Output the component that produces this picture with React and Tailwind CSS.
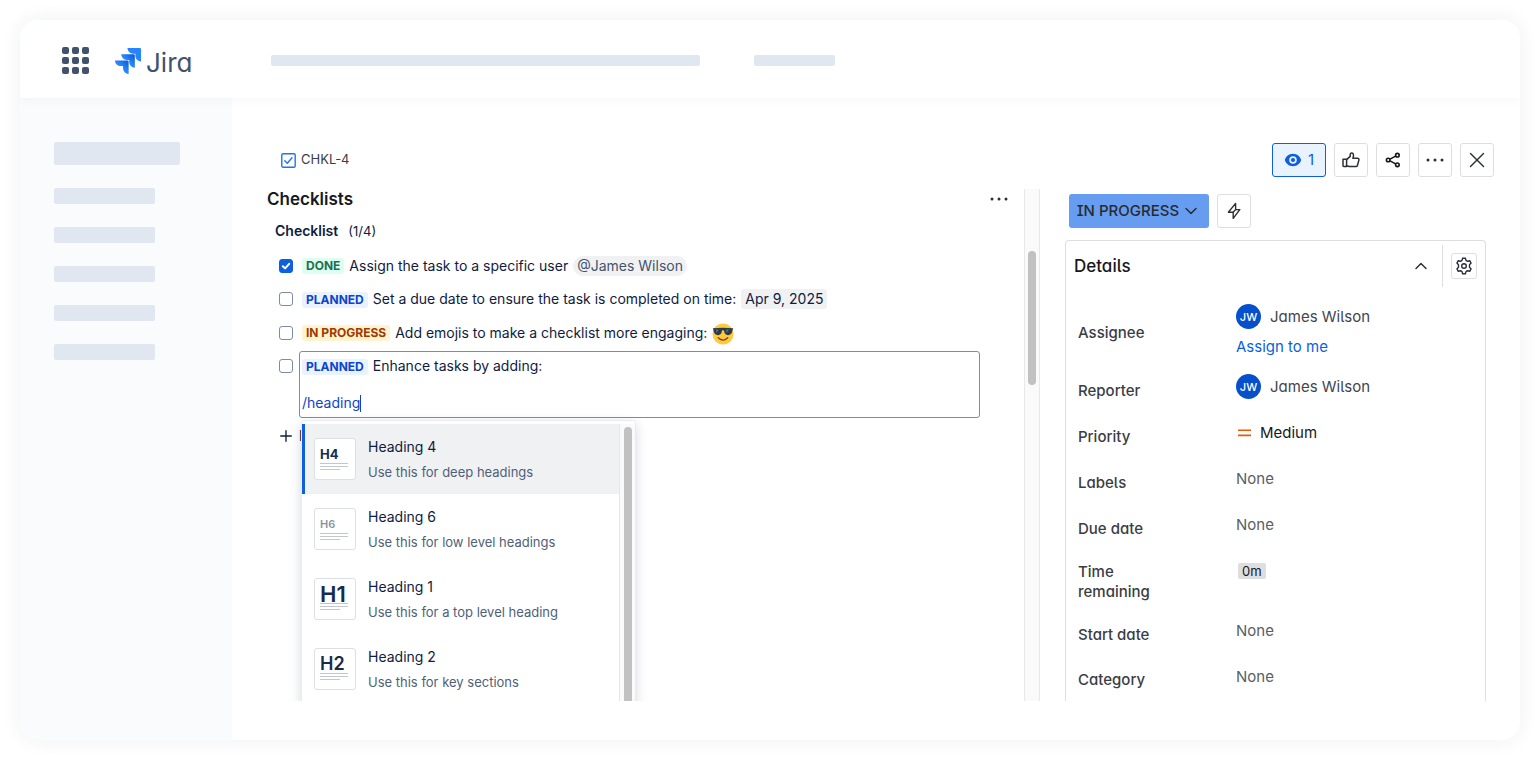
import React from "react";
import { ChevronDown, ChevronUp, Plus, X } from "lucide-react";

const TAGS = {
  DONE: "bg-[#dcfff1] text-[#216e4e]",
  PLANNED: "bg-[#e9f2ff] text-[#0c45cc]",
  "IN PROGRESS": "bg-[#fff4cf] text-[#a33800]",
};

function Tag({ name }) {
  return (
    <span className={"mt-px rounded-[3px] px-1 text-[12px] font-bold leading-4 " + TAGS[name]}>
      {name}
    </span>
  );
}

function Check({ id, label, checked }) {
  return (
    <span className="grid size-[14px] shrink-0">
      <input
        id={id}
        type="checkbox"
        aria-label={label}
        defaultChecked={checked}
        className="peer col-start-1 row-start-1 size-[14px] appearance-none rounded-[3px] border border-[#7f8ba0] bg-white checked:border-[#0c5fe0] checked:bg-[#0c5fe0]"
      />
      <svg
        viewBox="0 0 14 14"
        className="pointer-events-none col-start-1 row-start-1 hidden size-[14px] peer-checked:block"
        fill="none"
        stroke="#fff"
        strokeWidth="2"
        strokeLinecap="round"
        strokeLinejoin="round"
      >
        <path d="M3.8 7.2 6.1 9.4 10.2 4.8" />
      </svg>
    </span>
  );
}

function Dots({ className }) {
  return (
    <svg viewBox="0 0 18 4" className={className} fill="currentColor">
      <circle cx="2" cy="2" r="1.5" />
      <circle cx="9" cy="2" r="1.5" />
      <circle cx="16" cy="2" r="1.5" />
    </svg>
  );
}

function JiraMark() {
  return (
    <svg viewBox="0 0 24 24" className="size-[26px]">
      <defs>
        <linearGradient id="jiraMid" x1="18" y1="6" x2="11" y2="13" gradientUnits="userSpaceOnUse">
          <stop offset="0.15" stopColor="#0f5fd8" />
          <stop offset="0.8" stopColor="#2684ff" />
        </linearGradient>
        <linearGradient id="jiraLow" x1="12.5" y1="11.5" x2="5.5" y2="18.5" gradientUnits="userSpaceOnUse">
          <stop offset="0.15" stopColor="#0f5fd8" />
          <stop offset="0.8" stopColor="#2684ff" />
        </linearGradient>
      </defs>
      <path fill="#2684ff" d="M23.013 0H11.455a5.215 5.215 0 0 0 5.215 5.215h2.129v2.057A5.215 5.215 0 0 0 24 12.483V1.005A1.001 1.001 0 0 0 23.013 0Z" />
      <path fill="url(#jiraMid)" d="M17.294 5.757H5.736a5.215 5.215 0 0 0 5.215 5.214h2.129v2.058a5.218 5.218 0 0 0 5.215 5.214V6.758a1.001 1.001 0 0 0-1.001-1.001Z" />
      <path fill="url(#jiraLow)" d="M11.571 11.513H0a5.218 5.218 0 0 0 5.232 5.215h2.13v2.057A5.215 5.215 0 0 0 12.575 24V12.518a1.005 1.005 0 0 0-1.005-1.005Z" />
    </svg>
  );
}

function AppGrid() {
  return (
    <svg viewBox="0 0 27 27" className="size-[27px]" fill="#42526e">
      {[0, 10, 20].map((y) =>
        [0, 10, 20].map((x) => <rect key={x + "-" + y} x={x} y={y} width="7" height="7" rx="2" />)
      )}
    </svg>
  );
}

function Sunglasses() {
  return (
    <svg viewBox="0 0 22 22" className="mt-[3px] size-[22px]" role="img" aria-label="Smiling face with sunglasses">
      <circle cx="11" cy="11" r="10.5" fill="#ffc83d" />
      <path d="M.8 5.2Q11 4.4 21.2 5.2L20.6 6.8Q20 12.2 16 12.2 12.6 12.2 12 7.6L11 7.2 10 7.6Q9.4 12.2 6 12.2 2 12.2 1.4 6.8Z" fill="#2b3b47" />
      <path d="M4 6.6l2.6 0-2.2 3.4zM14.2 6.6l2.6 0-2.2 3.4z" fill="#5b7383" />
      <path d="M6.2 14.8Q11 19.4 15.8 14.8" fill="none" stroke="#7a4a12" strokeWidth="1.3" strokeLinecap="round" />
    </svg>
  );
}

function Eye() {
  return (
    <svg viewBox="0 0 18 14" className="h-[14px] w-[18px]">
      <path fillRule="evenodd" fill="#0c5fe0" d="M9 .8C4.8.8 1.9 3.6.8 7 1.9 10.4 4.8 13.2 9 13.2S16.1 10.4 17.2 7C16.1 3.6 13.2.8 9 .8Zm0 2.4a3.8 3.8 0 1 1 0 7.6 3.8 3.8 0 0 1 0-7.6Z" />
      <circle cx="9" cy="7" r="2.1" fill="#0c5fe0" />
    </svg>
  );
}

function Thumb() {
  return (
    <svg viewBox="0 0 18 16" className="h-4 w-[18px]" fill="none" stroke="#2c2f36" strokeWidth="1.5" strokeLinejoin="round">
      <path d="M1 7.2h3.6v7.4H2.2A1.2 1.2 0 0 1 1 13.4Z" />
      <path d="M4.6 7.6 8.2 4.4V2.6a1.6 1.6 0 0 1 3.1-.5c.5 1.4.2 2.7-.4 4.1h4.6a1.5 1.5 0 0 1 1.4 1.9l-1.5 5.4a1.5 1.5 0 0 1-1.4 1.1H7.8c-1.2 0-1.7-.7-3.2-.9" />
    </svg>
  );
}

function Share() {
  return (
    <svg viewBox="0 0 16 16" className="size-4" fill="none" stroke="#17181c" strokeWidth="1.6">
      <circle cx="3.2" cy="8" r="1.8" />
      <circle cx="12.4" cy="3.2" r="1.8" />
      <circle cx="12.4" cy="12.8" r="1.8" />
      <path d="M5 7.1 10.6 4.1M5 8.9l5.6 3" />
    </svg>
  );
}

function Bolt() {
  return (
    <svg viewBox="0 0 14 18" className="h-[18px] w-[14px]" fill="none" stroke="#2c2f36" strokeWidth="1.4" strokeLinejoin="round">
      <path d="M8.6 1.4 1.4 10.2h4.8v6.2l6.6-8.8H8.6Z" />
      <path d="M8.6 7.6 6.2 10.2" />
    </svg>
  );
}

function Gear() {
  return (
    <svg viewBox="0 0 18 18" className="size-[18px]" fill="none" stroke="#2c2f36" strokeWidth="1.4" strokeLinejoin="round">
      <path d="M7.6 1.2h2.8l.6 2.2 1.5.9 2.2-.6 1.4 2.4L14.5 7.7v2.6l1.6 1.6-1.4 2.4-2.2-.6-1.5.9-.6 2.2H7.6L7 14.6l-1.5-.9-2.2.6-1.4-2.4 1.6-1.6V7.7L1.9 6.1l1.4-2.4 2.2.6L7 3.4Z" />
      <circle cx="9" cy="9" r="2.3" />
    </svg>
  );
}

function IssueTypeIcon() {
  return (
    <svg viewBox="0 0 15 15" className="size-[15px]" fill="none" stroke="#2174ee" strokeWidth="1.4">
      <rect x="0.8" y="0.8" width="13.4" height="13.4" rx="1.2" />
      <path d="M3.8 7.8 6.3 10.2 11 4.8" strokeLinecap="round" strokeLinejoin="round" />
    </svg>
  );
}

const BOX = "flex h-[34px] items-center justify-center rounded-[3px] border border-[#dcdee2] bg-white text-[#2c2f36]";

function HeadingOption({ code, codeClass, title, text, active }) {
  return (
    <button
      type="button"
      className={
        "flex h-[70px] w-full items-center gap-3 border-l-[3px] pl-[9px] text-left " +
        (active ? "border-[#0c5fe0] bg-[#f0f1f3]" : "border-transparent")
      }
    >
      <span className="flex size-[42px] flex-col justify-end rounded-[3px] border border-[#dcdfe4] bg-white px-[5px] pb-2">
        <span className={"leading-4 " + codeClass}>{code}</span>
        <svg viewBox="0 0 28 9" className="h-[9px] w-7" stroke="#c1c7d0" strokeWidth="1.2">
          <path d="M0 1.5h28M0 4.5h28M0 7.5h20" />
        </svg>
      </span>
      <span className="flex flex-col gap-[5px]">
        <span className="text-[14px] leading-5 text-[#0f1c40]">{title}</span>
        <span className="text-[13px] leading-5 text-[#505f79]">{text}</span>
      </span>
    </button>
  );
}

const HEADINGS = [
  { code: "H4", codeClass: "text-[13px] font-bold text-[#172b4d]", title: "Heading 4", text: "Use this for deep headings", active: true },
  { code: "H6", codeClass: "text-[11px] font-semibold text-[#8993a4]", title: "Heading 6", text: "Use this for low level headings" },
  { code: "H1", codeClass: "text-[22px] font-semibold text-[#172b4d]", title: "Heading 1", text: "Use this for a top level heading" },
  { code: "H2", codeClass: "text-[18px] font-semibold text-[#172b4d]", title: "Heading 2", text: "Use this for key sections" },
];

function Person() {
  return (
    <span className="flex items-center gap-[9px]">
      <span className="flex size-[25px] items-center justify-center rounded-full bg-[#0650cc] text-[11px] font-medium text-white">
        JW
      </span>
      <span className="text-[#42454d]">James Wilson</span>
    </span>
  );
}

function Field({ label, height, children }) {
  return (
    <div className={"flex " + (height || "h-[46px]")}>
      <dt className="flex w-[158px] shrink-0 items-center pr-16 pt-[2px] font-medium text-[#3a3d44]">{label}</dt>
      <dd className="flex flex-col items-start gap-2 pt-[7px]">{children}</dd>
    </div>
  );
}

function None() {
  return <span className="leading-[25px] text-[#5a5d66]">None</span>;
}

export default function App() {
  return (
    <div className="flex min-h-screen bg-white p-5 font-['Inter',sans-serif]">
      <div className="flex flex-1 flex-col overflow-hidden rounded-[18px] bg-white shadow-[0_0_20px_rgba(23,43,77,0.07)]">
        <header className="z-10 flex h-[78px] shrink-0 items-center bg-white pl-[42px] pt-[3px] shadow-[0_2px_10px_rgba(23,43,77,0.04)]">
          <button type="button" aria-label="App switcher">
            <AppGrid />
          </button>
          <a href="#" className="ml-[26px] flex items-center gap-[5px]">
            <JiraMark />
            <span className="pt-1 text-[26px] leading-8 text-[#42526e] [font-feature-settings:'cv11']">Jira</span>
          </a>
          <div className="ml-[79px] h-[11px] w-[429px] rounded-[2px] bg-[#e1e7f0]" />
          <div className="ml-[54px] h-[11px] w-[81px] rounded-[2px] bg-[#e1e7f0]" />
        </header>

        <div className="flex flex-1">
          <nav className="flex w-[212px] shrink-0 flex-col gap-[23px] bg-[#fafbfc] pl-[34px] pt-11">
            <div className="h-[23px] w-[126px] rounded-[2px] bg-[#e1e7f0]" />
            {[0, 1, 2, 3, 4].map((i) => (
              <div key={i} className="h-4 w-[101px] rounded-[2px] bg-[#e1e7f0]" />
            ))}
          </nav>

          <main className="flex min-w-0 flex-1 flex-col gap-3 pb-[39px] pt-[45px]">
            <div className="flex items-center justify-between pl-[49px] pr-[26px]">
              <a href="#" className="flex items-center gap-[5px] text-[13px] text-[#3a3d44]">
                <IssueTypeIcon />
                CHKL-4
              </a>
              <div className="flex gap-2">
                <button type="button" aria-label="Watchers: 1" className="flex h-[34px] w-[54px] items-center justify-center gap-1.5 rounded-[3px] border border-[#0c5fe0] bg-[#e9f2ff] text-[15px] text-[#0c5fe0]">
                  <Eye />1
                </button>
                <button type="button" aria-label="Like" className={BOX + " w-[34px]"}><Thumb /></button>
                <button type="button" aria-label="Share" className={BOX + " w-[34px]"}><Share /></button>
                <button type="button" aria-label="More actions" className={BOX + " w-[34px]"}><Dots className="h-1 w-[18px]" /></button>
                <button type="button" aria-label="Close" className={BOX + " w-[34px]"}><X size={26} strokeWidth={1.3} /></button>
              </div>
            </div>

            <div className="relative flex flex-1 overflow-hidden pr-[34px]">
              <section className="min-w-0 flex-1 pl-[35px] text-[14px] text-[#0f1c40]">
                <div className="flex items-center justify-between pr-4">
                  <h1 className="text-[17px] font-semibold leading-5 text-[#17181c]">Checklists</h1>
                  <button type="button" aria-label="Checklist actions" className="text-[#2c2f36]"><Dots className="h-1 w-[18px]" /></button>
                </div>
                <h2 className="mt-3 flex items-center gap-2.5 pl-2 font-semibold leading-5">
                  Checklist
                  <span className="text-[13px] font-normal">(1/4)</span>
                </h2>

                <ul className="mt-2 pl-3 leading-5">
                  <li className="flex h-[33px] items-center gap-[9px]">
                    <Check id="item-1" checked />
                    <label htmlFor="item-1" className="flex items-center gap-[5px]">
                      <Tag name="DONE" />
                      Assign the task to a specific user
                      <span className="rounded-full bg-[#f0f1f3] px-1 text-[#44546f]">@James Wilson</span>
                    </label>
                  </li>
                  <li className="flex h-[34px] items-center gap-[9px]">
                    <Check id="item-2" />
                    <label htmlFor="item-2" className="flex items-center gap-[5px]">
                      <Tag name="PLANNED" />
                      Set a due date to ensure the task is completed on time:
                      <span className="rounded-[3px] bg-[#f0f1f3] px-1">Apr 9, 2025</span>
                    </label>
                  </li>
                  <li className="flex h-[33px] items-center gap-[9px]">
                    <Check id="item-3" />
                    <label htmlFor="item-3" className="flex items-center gap-[5px]">
                      <Tag name="IN PROGRESS" />
                      Add emojis to make a checklist more engaging:
                      <Sunglasses />
                    </label>
                  </li>
                  <li className="flex items-start gap-[6px] pr-11 pt-[2px]">
                    <span className="pt-2"><Check id="item-4" label="Enhance tasks by adding:" /></span>
                    <div className="relative h-[67px] flex-1 rounded-[3px] border border-[#7f8ba0] px-[2px] pt-1">
                      <div className="flex items-center gap-[5px]">
                        <Tag name="PLANNED" />
                        Enhance tasks by adding:
                      </div>
                      <div className="mt-[17px] flex items-center">
                        <input
                          type="text"
                          aria-label="Item text"
                          defaultValue="/heading"
                          className="field-sizing-content bg-transparent p-0 leading-5 text-[#0c45cc] outline-none"
                        />
                        <span className="h-[17px] w-px bg-[#0c45cc]" />
                      </div>

                      <div className="absolute left-[1px] top-full z-20 mt-[3px] flex w-[335px] rounded-t-[3px] border border-[#e9ebee] bg-white pt-[3px] shadow-[0_4px_12px_rgba(23,43,77,0.18)]">
                        <div className="flex-1">
                          {HEADINGS.map((h) => (
                            <HeadingOption key={h.code} {...h} />
                          ))}
                        </div>
                        <div className="flex w-4 justify-center border-l border-[#e6e6e6] bg-[#fafafa] pt-[3px]">
                          <div className="w-2 rounded-t-full bg-[#c1c1c1]" />
                        </div>
                      </div>
                    </div>
                  </li>
                </ul>
                <button type="button" className="mt-2 flex items-center gap-1 pl-[10px] font-medium leading-5">
                  <Plus size={18} strokeWidth={1.8} />N
                </button>
              </section>

              <div className="flex w-4 shrink-0 justify-center border-x border-[#e8e8e8] bg-[#fafafa] pt-[62px]">
                <div className="h-[134px] w-2 rounded-full bg-[#c1c1c1]" />
              </div>

              <aside className="ml-[25px] flex w-[421px] shrink-0 flex-col pt-[5px] text-[15px] [font-feature-settings:'cv05','cv08','cv11']">
                <div className="flex gap-2 pl-1">
                  <button type="button" className="flex h-[34px] w-[140px] items-center justify-center gap-0.5 rounded-[3px] bg-[#669df1] font-medium text-[#292a2e]">
                    IN PROGRESS
                    <ChevronDown size={20} strokeWidth={1.7} />
                  </button>
                  <button type="button" aria-label="Automation" className={BOX + " w-[34px]"}><Bolt /></button>
                </div>

                <div className="mt-3 flex-1 rounded-t-[4px] border border-b-0 border-[#dcdee2] pl-3">
                  <div className="flex items-center pt-1">
                    <h2 className="-ml-1 flex-1 text-[17px] font-medium leading-5 text-[#17181c]">Details</h2>
                    <button type="button" aria-label="Collapse details" className="mr-[11px] text-[#2c2f36]"><ChevronUp size={20} strokeWidth={1.7} /></button>
                    <div className="flex h-[42px] items-center border-l border-[#dcdee2] px-2">
                      <button type="button" aria-label="Configure fields" className="flex size-[26px] items-center justify-center rounded-[3px] border border-[#dcdee2]"><Gear /></button>
                    </div>
                  </div>
                  <dl className="pt-[10px] leading-5">
                    <Field label="Assignee" height="h-[70px]">
                      <Person />
                      <a href="#" className="text-[#0c5fe0]">Assign to me</a>
                    </Field>
                    <Field label="Reporter"><Person /></Field>
                    <Field label="Priority">
                      <span className="flex h-[25px] items-center gap-[9px] pl-[2px] text-[#17181c]">
                        <svg viewBox="0 0 13 8" className="h-2 w-[13px]" stroke="#e8590c" strokeWidth="1.6"><path d="M0 1.2h13M0 6.4h13" /></svg>
                        Medium
                      </span>
                    </Field>
                    <Field label="Labels"><None /></Field>
                    <Field label="Due date"><None /></Field>
                    <Field label="Time remaining" height="h-[60px]">
                      <span className="flex h-[25px] items-center pl-[2px]">
                        <span className="rounded-[2px] bg-[#dddee1] px-1 text-[13px] leading-4 text-[#17181c]">0m</span>
                      </span>
                    </Field>
                    <Field label="Start date"><None /></Field>
                    <Field label="Category" height="h-11"><None /></Field>
                  </dl>
                </div>
              </aside>
            </div>
          </main>
        </div>
      </div>
    </div>
  );
}
